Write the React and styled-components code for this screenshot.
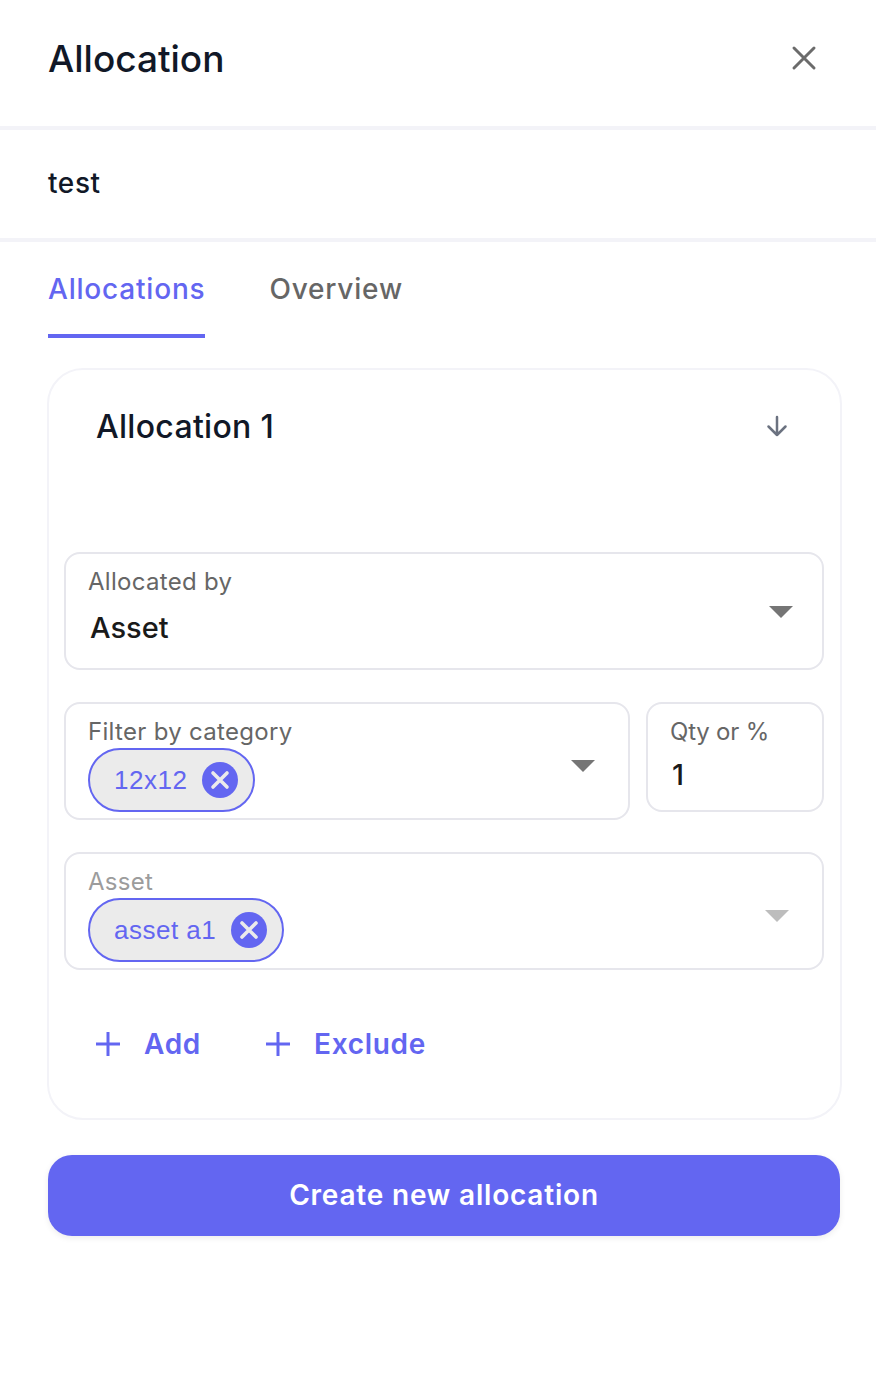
import React from 'react';
import styled, { createGlobalStyle } from 'styled-components';

const Global = createGlobalStyle`
  html, body { margin: 0; padding: 0; background: #fff; }
  * { box-sizing: border-box; }
  body { font-family: Inter, "Liberation Sans", sans-serif; -webkit-font-smoothing: antialiased; }
`;

const Page = styled.div`
  width: 876px;
  height: 1374px;
  background: #fff;
  overflow: hidden;
`;
const Header = styled.header`
  height: 130px;
  padding: 0 48px 10px;
  border-bottom: 4px solid #f3f3f8;
  display: flex;
  align-items: center;
  justify-content: space-between;
`;
const Title = styled.h1`
  margin: 0;
  font-size: 37px;
  font-weight: 500;
  color: #111827;
`;
const CloseButton = styled.button`
  border: 0;
  background: none;
  padding: 0;
  margin: 0 8px 0 0;
  width: 32px;
  height: 32px;
  color: #6b6b6b;
  display: flex;
`;
const NameRow = styled.div`
  height: 112px;
  padding: 0 48px 2px;
  border-bottom: 4px solid #f3f3f8;
  display: flex;
  align-items: center;
  font-size: 28px;
  font-weight: 500;
  letter-spacing: 0.6px;
  color: #111827;
`;
const Tabs = styled.nav`
  display: flex;
  gap: 64px;
  padding: 0 48px;
  height: 96px;
`;
const Tab = styled.div`
  height: 96px;
  padding-top: 28px;
  font-size: 28px;
  line-height: 38px;
  font-weight: 500;
  letter-spacing: 0.8px;
  color: ${p => (p.$active ? '#6366f1' : '#666666')};
  border-bottom: 4px solid ${p => (p.$active ? '#6366f1' : 'transparent')};
`;
const Card = styled.section`
  margin: 30px 0 0 47px;
  width: 795px;
  height: 752px;
  border: 2px solid #f3f3f8;
  border-radius: 36px;
  padding: 0 16px 0 15px;
`;
const CardHead = styled.div`
  height: 182px;
  padding: 38px 35px 0 32px;
  display: flex;
  justify-content: space-between;
  align-items: flex-start;
`;
const CardTitle = styled.h2`
  margin: 0;
  font-size: 32px;
  line-height: 38px;
  font-weight: 500;
  letter-spacing: 0.3px;
  color: #111827;
`;
const ArrowIcon = styled.svg`
  width: 24px;
  height: 24px;
  margin-top: 6px;
  color: #6b7280;
`;
const Fields = styled.div`
  display: flex;
  flex-direction: column;
  gap: 32px;
`;
const Row = styled.div`
  display: flex;
  gap: 16px;
  align-items: flex-start;
`;
const Field = styled.div`
  position: relative;
  flex: none;
  width: ${p => p.$width || 'auto'};
  height: ${p => p.$height || '118px'};
  border: 2px solid #e6e6ec;
  border-radius: 16px;
  padding: 13px 22px 0;
`;
const Label = styled.div`
  font-size: 24px;
  line-height: 30px;
  font-weight: 400;
  letter-spacing: ${p => p.$spacing || '0.3px'};
  color: ${p => (p.$disabled ? '#9c9c9c' : '#666666')};
`;
const Value = styled.div`
  margin: ${p => p.$margin || '0'};
  font-size: 29px;
  line-height: 36px;
  font-weight: 500;
  color: #1a1a1a;
`;
const Chip = styled.div`
  display: inline-flex;
  align-items: center;
  height: 64px;
  margin-top: 1px;
  padding: 0 15px 0 24px;
  gap: 15px;
  border: 2px solid #6366f1;
  border-radius: 32px;
  background: #ebebeb;
  color: #6366f1;
  font-family: "Liberation Sans", Arial, sans-serif;
  font-size: 26px;
  letter-spacing: 0.5px;
`;
const ChipIcon = styled.svg`
  width: 36px;
  height: 36px;
  flex: none;
`;
const Caret = styled.span`
  position: absolute;
  right: ${p => p.$right || '29px'};
  top: ${p => p.$top || '52px'};
  width: 0;
  height: 0;
  border-left: 12px solid transparent;
  border-right: 12px solid transparent;
  border-top: 12px solid ${p => (p.$disabled ? '#bdbdbd' : '#757575')};
`;
const Actions = styled.div`
  display: flex;
  gap: 63px;
  margin-top: 54px;
  padding-left: 30px;
`;
const Action = styled.button`
  display: flex;
  align-items: center;
  gap: 22px;
  border: 0;
  background: none;
  padding: 0;
  height: 40px;
  font-family: inherit;
  font-size: 28px;
  font-weight: 600;
  letter-spacing: 0.7px;
  color: #6366f1;
`;
const PlusIcon = styled.svg`
  width: 28px;
  height: 28px;
  color: #6366f1;
`;
const Primary = styled.button`
  display: block;
  margin: 35px 0 0 48px;
  width: 792px;
  height: 81px;
  padding: 0 0 2px;
  border: 0;
  border-radius: 24px;
  background: #6366f1;
  box-shadow: 0 2px 6px rgba(0, 0, 0, 0.08);
  color: #fff;
  font-family: inherit;
  font-size: 28px;
  font-weight: 600;
  letter-spacing: 0.8px;
`;

const X = () => (
  <svg width="32" height="32" viewBox="0 0 32 32" fill="none" stroke="currentColor" strokeWidth="3" strokeLinecap="round">
    <path d="M6 6 L26 26 M26 6 L6 26" />
  </svg>
);
const ChipClose = () => (
  <ChipIcon viewBox="0 0 36 36">
    <circle cx="18" cy="18" r="18" fill="#6366f1" />
    <path d="M11 11 L25 25 M25 11 L11 25" stroke="#ebebeb" strokeWidth="3.6" strokeLinecap="round" />
  </ChipIcon>
);
const Plus = () => (
  <PlusIcon viewBox="0 0 28 28" fill="none" stroke="currentColor" strokeWidth="3">
    <path d="M14 2 V26 M2 14 H26" />
  </PlusIcon>
);

export default function App() {
  return (
    <Page>
      <Global />
      <Header>
        <Title>Allocation</Title>
        <CloseButton aria-label="Close"><X /></CloseButton>
      </Header>
      <NameRow>test</NameRow>
      <Tabs>
        <Tab $active>Allocations</Tab>
        <Tab>Overview</Tab>
      </Tabs>
      <Card>
        <CardHead>
          <CardTitle>Allocation 1</CardTitle>
          <ArrowIcon viewBox="0 0 24 24" fill="none" stroke="currentColor" strokeWidth="2.5" strokeLinecap="round" strokeLinejoin="round">
            <path d="M12 3 V21 M3.5 12.5 L12 21 L20.5 12.5" />
          </ArrowIcon>
        </CardHead>
        <Fields>
          <Field>
            <Label>Allocated by</Label>
            <Value $margin="13px 0 0 2px">Asset</Value>
            <Caret />
          </Field>
          <Row>
            <Field $width="566px">
              <Label>Filter by category</Label>
              <Chip>12x12<ChipClose /></Chip>
              <Caret $right="33px" $top="56px" />
            </Field>
            <Field $width="178px" $height="110px">
              <Label $spacing="-0.2px">Qty or %</Label>
              <Value $margin="10px 0 0 2px">1</Value>
            </Field>
          </Row>
          <Field>
            <Label $disabled>Asset</Label>
            <Chip>asset a1<ChipClose /></Chip>
            <Caret $disabled $right="33px" $top="56px" />
          </Field>
        </Fields>
        <Actions>
          <Action><Plus />Add</Action>
          <Action><Plus />Exclude</Action>
        </Actions>
      </Card>
      <Primary>Create new allocation</Primary>
    </Page>
  );
}
